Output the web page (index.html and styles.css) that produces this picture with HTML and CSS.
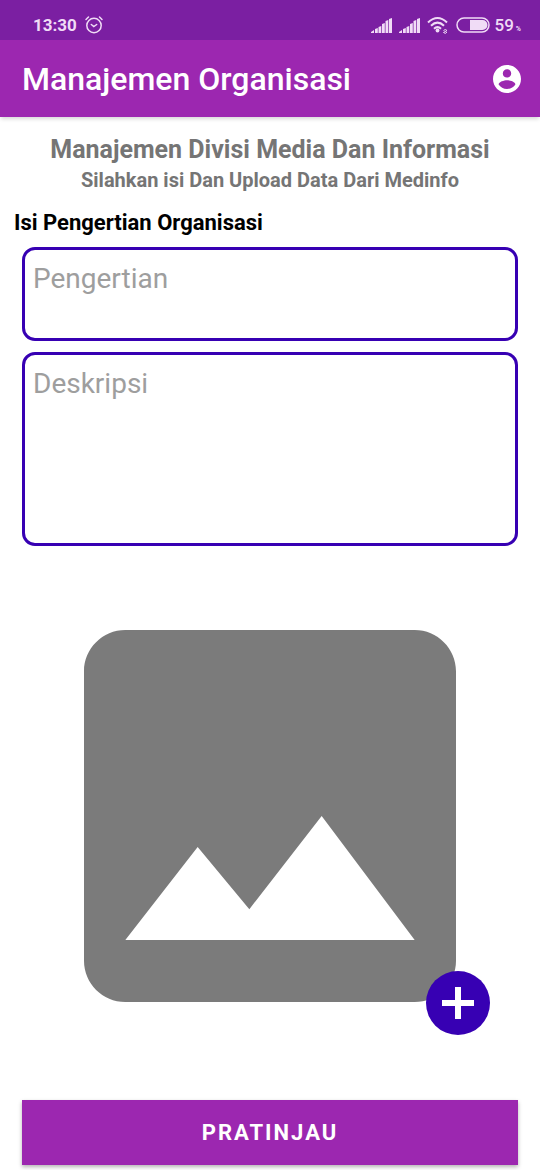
FILE: index.html
```html
<!DOCTYPE html>
<html lang="id">
<head>
<meta charset="utf-8">
<meta name="viewport" content="width=device-width, initial-scale=1">
<title>Manajemen Organisasi</title>
<link rel="stylesheet" href="styles.css">
</head>
<body>
<div class="status-bar">
  <div class="status-group">
    <span class="clock">13:30</span>
    <svg class="alarm" viewBox="0 0 20 20" aria-hidden="true">
      <g fill="none" stroke="currentColor" stroke-width="1.5" stroke-linecap="round">
        <circle cx="10" cy="10.500" r="7.200"/>
        <path d="M2 4.500 4.500 2M18 4.500 15.500 2M7.300 9.500 9.800 11.500 12.700 9.500"/>
      </g>
    </svg>
  </div>
  <div class="status-group status-icons">
    <svg class="signal" viewBox="0 0 21 16" aria-hidden="true"><path fill="currentColor" d="M0 15l3-2v3H0zM4 12l2.800-1v5H4zM7.500 10l2.800-1v7H7.500zM11 7l2.800-1v10H11zM14.500 4l2.800-1v13h-2.800zM18 2l3-1v15h-3z"/></svg>
    <svg class="signal" viewBox="0 0 21 16" aria-hidden="true"><path fill="currentColor" d="M0 15l3-2v3H0zM4 12l2.800-1v5H4zM7.500 10l2.800-1v7H7.500zM11 7l2.800-1v10H11zM14.500 4l2.800-1v13h-2.800zM18 2l3-1v15h-3z"/></svg>
    <svg class="wifi" viewBox="0 0 22 18" aria-hidden="true">
      <g fill="none" stroke="currentColor" stroke-width="2">
        <path d="M1 6.500Q10.500-2.500 20 6.500M4 9.800Q10.500 3.500 17 9.800M7 12.800Q10.500 9.500 14 12.800"/>
        <path stroke-width="1" d="M16.500 14.500q2-2 3.500 0l-3.500 2q2 2 3.500-.5"/>
      </g>
      <circle cx="10.500" cy="14.500" r="1.900" fill="currentColor"/>
    </svg>
    <svg class="battery" viewBox="0 0 34 16" aria-hidden="true">
      <rect x="1" y="1" width="32" height="14" rx="7" fill="none" stroke="currentColor" stroke-width="1.500"/>
      <path fill="currentColor" d="M14 3h12.500a5 5 0 0 1 0 10H14z"/>
    </svg>
    <span class="charge">59<small>%</small></span>
  </div>
</div>
<header class="app-bar">
  <h1>Manajemen Organisasi</h1>
  <button class="account" type="button" aria-label="Akun">
    <svg viewBox="2 2 20 20" aria-hidden="true"><path fill="currentColor" d="M12 2C6.480 2 2 6.480 2 12s4.480 10 10 10 10-4.480 10-10S17.520 2 12 2zm0 3c1.660 0 3 1.340 3 3s-1.340 3-3 3-3-1.340-3-3 1.340-3 3-3zm0 14.200c-2.500 0-4.710-1.280-6-3.220.030-1.990 4-3.080 6-3.080 1.990 0 5.970 1.090 6 3.080-1.290 1.940-3.500 3.220-6 3.220z"/></svg>
  </button>
</header>
<main>
  <h2>Manajemen Divisi Media Dan Informasi</h2>
  <p class="subtitle">Silahkan isi Dan Upload Data Dari Medinfo</p>
  <form>
    <label class="form-label" for="pengertian">Isi Pengertian Organisasi</label>
    <textarea class="field" id="pengertian" placeholder="Pengertian"></textarea>
    <textarea class="field field-tall" id="deskripsi" placeholder="Deskripsi" aria-label="Deskripsi"></textarea>
    <div class="picture">
      <svg class="picture-icon" viewBox="0 0 24 24" aria-hidden="true"><path fill="currentColor" d="M21 19V5c0-1.100-.900-2-2-2H5c-1.100 0-2 .900-2 2v14c0 1.100.900 2 2 2h14c1.100 0 2-.900 2-2zM8.500 13.500l2.500 3.010L14.500 12l4.500 6H5l3.500-4.500z"/></svg>
      <button class="add" type="button" aria-label="Tambah gambar">
        <svg viewBox="0 0 32 32" aria-hidden="true"><path fill="currentColor" d="M13 0h6v13h13v6H19v13h-6V19H0v-6h13z"/></svg>
      </button>
    </div>
    <button class="preview" type="submit">PRATINJAU</button>
  </form>
</main>
</body>
</html>
```
FILE: styles.css
```css
* {
  box-sizing: border-box;
}

body {
  margin: 0;
  background: #fff;
  font-family: Roboto, sans-serif;
}

svg {
  display: block;
}

h1, h2, p {
  margin: 0;
}

button {
  border: 0;
  padding: 0;
  color: #fff;
  font-family: inherit;
}

.status-bar {
  display: flex;
  justify-content: space-between;
  height: 40px;
  padding: 9px 19px 0 33px;
  background: #7b1fa2;
  color: #f0dcf6;
}

.status-group {
  display: flex;
  align-items: center;
  gap: 7px;
}

.clock {
  font-size: 17px;
  font-weight: 700;
}

.alarm {
  width: 20px;
  height: 20px;
}

.status-icons {
  gap: 7px;
}

.signal {
  width: 21px;
  height: 16px;
}

.wifi {
  width: 22px;
  height: 18px;
}

.battery {
  width: 34px;
  height: 16px;
}

.charge {
  margin-left: -3px;
  font-size: 17px;
  font-weight: 500;
}

.charge small {
  margin-left: 2px;
  font-size: 7px;
  font-weight: 700;
}

.app-bar {
  position: relative;
  display: flex;
  align-items: center;
  justify-content: space-between;
  height: 77px;
  padding: 0 19px 0 22px;
  background: #9c27b0;
  box-shadow: 0 3px 4px -1px rgba(0, 0, 0, 0.16);
  color: #fff;
}

h1 {
  font-size: 32px;
  font-weight: 500;
}

.account {
  width: 28px;
  height: 28px;
  background: none;
}

main {
  padding: 17px 22px 5px;
}

h2 {
  color: #757575;
  font-size: 25px;
  font-weight: 700;
  line-height: 32px;
  text-align: center;
}

.subtitle {
  color: #757575;
  font-size: 20px;
  font-weight: 700;
  line-height: 28px;
  text-align: center;
}

form {
  display: flex;
  flex-direction: column;
  margin-top: 15px;
}

.form-label {
  margin: 0 -8px 10px;
  font-size: 22px;
  font-weight: 700;
  line-height: 28px;
}

.field {
  width: 100%;
  height: 94px;
  margin: 0 0 11px;
  padding: 13px 8px;
  border: 3px solid #3700b3;
  border-radius: 13px;
  outline: 0;
  background: #fff;
  color: #212121;
  font-family: inherit;
  font-size: 28px;
  line-height: 32px;
  resize: none;
}

.field::placeholder {
  color: #9e9e9e;
  opacity: 1;
}

.field-tall {
  height: 194px;
}

.picture {
  position: relative;
  margin: 11px 0 36px;
}

.picture-icon {
  width: 100%;
  color: #7b7b7b;
}

.add {
  position: absolute;
  right: 28px;
  bottom: 29px;
  display: grid;
  place-items: center;
  width: 64px;
  height: 64px;
  border-radius: 50%;
  background: #3700b3;
}

.add svg {
  width: 32px;
}

.preview {
  height: 65px;
  background: #9c27b0;
  box-shadow: 0 2px 4px rgba(0, 0, 0, 0.3);
  font-size: 22px;
  font-weight: 700;
  letter-spacing: 2px;
}
```
